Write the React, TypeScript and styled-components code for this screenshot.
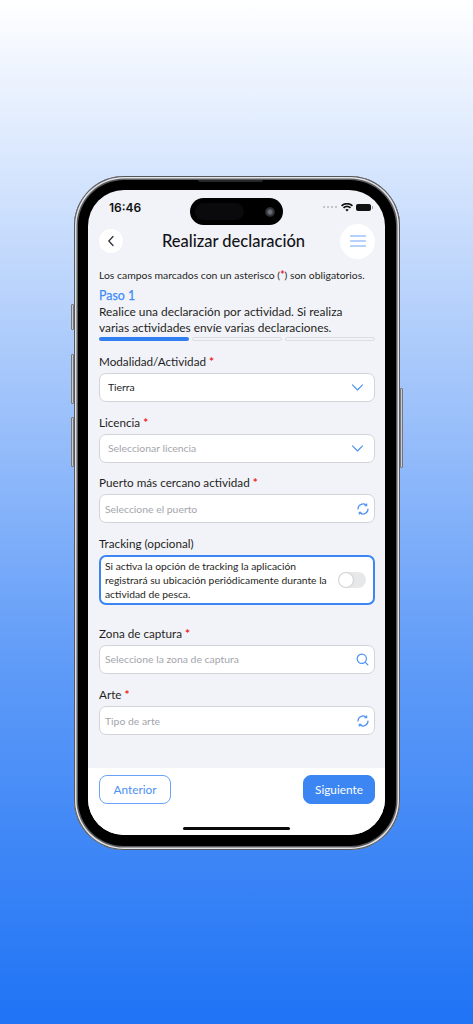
import React from "react";
import styled, { createGlobalStyle } from "styled-components";

const Global = createGlobalStyle`
  html, body { margin: 0; padding: 0; }
  body { font-family: "Lato", "Noto Sans", sans-serif; }
`;

const Page = styled.div`
  width: 473px;
  height: 1024px;
  box-sizing: border-box;
  padding: 176px 0 0 74px;
  background: linear-gradient(180deg, #ffffff 0%, #a9c9fb 35%, #5f9bf8 65%, #1f73f5 100%);
  overflow: hidden;
`;

const Phone = styled.div`
  position: relative;
  width: 326px;
  height: 674px;
  box-sizing: border-box;
  padding: 14px 15px 15px 14px;
  border-radius: 50px;
  background: #000;
  box-shadow: inset 0 0 0 1px #55575b, inset 0 0 0 2.5px #e2e4e7, inset 0 0 0 4px #5a5c60;
`;

const Speaker = styled.span`
  position: absolute;
  top: 4px;
  left: 124px;
  width: 65px;
  height: 2px;
  border-radius: 0 0 2px 2px;
  background: #26272a;
`;

const SideButton = styled.span<{ $side: "left" | "right"; $top: number; $h: number }>`
  position: absolute;
  top: ${p => p.$top}px;
  ${p => (p.$side === "left" ? "left: -3px;" : "right: -3px;")}
  width: 3px;
  height: ${p => p.$h}px;
  box-sizing: border-box;
  background: #c9cbcf;
  border: 1px solid #74767a;
  border-radius: 1px;
`;

const Screen = styled.div`
  width: 297px;
  height: 645px;
  border-radius: 36px;
  background: #f2f3f8;
  overflow: hidden;
  display: flex;
  flex-direction: column;
  position: relative;
`;

const StatusBar = styled.div`
  height: 30px;
  flex: none;
  display: flex;
  align-items: center;
  justify-content: space-between;
  padding: 4px 13px 0 21px;
  box-sizing: border-box;
`;

const Time = styled.span`
  font-family: "Inter", sans-serif;
  font-weight: 600;
  font-size: 12px;
  color: #111;
`;

const Island = styled.div`
  position: absolute;
  top: 8px;
  left: 102px;
  width: 93px;
  height: 27px;
  border-radius: 14px;
  background: #000;
`;

const IslandPill = styled.span`
  position: absolute;
  top: 5px;
  left: 5px;
  width: 49px;
  height: 17px;
  border-radius: 9px;
  background: #0a0a0c;
`;

const Lens = styled.span`
  position: absolute;
  top: 8.5px;
  right: 8.5px;
  width: 10px;
  height: 10px;
  border-radius: 50%;
  background: radial-gradient(circle, #6a6d74 0 22%, #33353b 48%, #101014 100%);
`;

const StatusIcons = styled.div`
  display: flex;
  align-items: center;
  gap: 3px;
`;

const Dots = styled.div`
  display: flex;
  gap: 1.5px;
  margin-right: 1px;
`;

const Dot = styled.span`
  width: 2.5px;
  height: 2.5px;
  border-radius: 50%;
  background: #b4b6bb;
`;

const Battery = styled.span`
  position: relative;
  width: 15px;
  height: 7px;
  border-radius: 2px;
  background: #111;
  margin-right: 1px;

  &::after {
    content: "";
    position: absolute;
    top: 2px;
    right: -2px;
    width: 1px;
    height: 3px;
    background: #9a9ca0;
  }
`;

const Header = styled.div`
  height: 42px;
  flex: none;
  display: flex;
  align-items: center;
  justify-content: space-between;
  padding: 0 10px 0 11px;
  box-sizing: border-box;
`;

const BackButton = styled.div`
  width: 24px;
  height: 24px;
  border-radius: 50%;
  background: #fff;
  display: flex;
  align-items: center;
  justify-content: center;
`;

const MenuButton = styled.div`
  width: 35px;
  height: 35px;
  border-radius: 50%;
  background: #fff;
  display: flex;
  align-items: center;
  justify-content: center;
`;

const Title = styled.h1`
  margin: 0 0 0 4px;
  font-size: 16.5px;
  font-weight: 500;
  color: #141418;
`;

const Content = styled.div`
  flex: 1;
  padding: 0 10px 0 11px;
  display: flex;
  flex-direction: column;
`;

const Note = styled.p`
  margin: 6px 0 0;
  font-size: 10.4px;
  line-height: 14px;
  color: #1f1f23;
`;

const Star = styled.span`
  color: #f01c1c;
  font-weight: 700;
`;

const Step = styled.div`
  margin-top: 6px;
  font-size: 12.4px;
  line-height: 15px;
  color: #3f8cf7;
  -webkit-text-stroke: 0.25px #3f8cf7;
`;

const Intro = styled.p`
  margin: 1px 0 0;
  font-size: 11.9px;
  line-height: 15.5px;
  color: #1f1f23;
`;

const Progress = styled.div`
  margin-top: 2px;
  display: grid;
  grid-template-columns: repeat(3, 1fr);
  gap: 3.5px;
`;

const Bar = styled.span<{ $on?: boolean }>`
  height: 4px;
  box-sizing: border-box;
  border-radius: 2px;
  background: ${p => (p.$on ? "#2f7ff0" : "#f2f3f8")};
  border: ${p => (p.$on ? "none" : "1px solid #dcdee3")};
`;

const Label = styled.div<{ $gap?: number }>`
  margin-top: ${p => p.$gap ?? 13}px;
  margin-bottom: 4px;
  font-size: 11.7px;
  line-height: 15px;
  color: #1f1f23;
`;

const Field = styled.div<{ $indent?: number }>`
  height: 29px;
  box-sizing: border-box;
  background: #fff;
  border: 1px solid #d3d4d9;
  border-radius: 7px;
  display: flex;
  align-items: center;
  justify-content: space-between;
  padding: 0 5px 0 ${p => p.$indent ?? 5}px;
`;

const Value = styled.span<{ $muted?: boolean; $lift?: boolean }>`
  font-size: 10.4px;
  color: ${p => (p.$muted ? "#a3a5ab" : "#222226")};
  margin-bottom: ${p => (p.$lift ? "2px" : "0")};
`;

const TrackBox = styled.div`
  height: 50px;
  box-sizing: border-box;
  background: #fff;
  border: 2px solid #3b86f2;
  border-radius: 7px;
  display: flex;
  align-items: center;
  justify-content: space-between;
  padding: 0 7px 0 4px;
`;

const TrackText = styled.p`
  margin: 0;
  width: 230px;
  font-size: 10.3px;
  line-height: 14px;
  color: #1f1f23;
`;

const Switch = styled.span`
  position: relative;
  width: 28px;
  height: 16px;
  border-radius: 8px;
  background: #e7e8ea;
  flex: none;
`;

const Knob = styled.span`
  position: absolute;
  top: 1px;
  left: 1px;
  width: 14px;
  height: 14px;
  border-radius: 50%;
  background: #fff;
  box-shadow: 0 0 2px rgba(0, 0, 0, 0.3);
`;

const Footer = styled.div`
  height: 67px;
  flex: none;
  background: #fff;
  display: flex;
  justify-content: space-between;
  align-items: flex-start;
  padding: 7px 10px 0 11px;
  box-sizing: border-box;
  position: relative;
`;

const Button = styled.div<{ $primary?: boolean }>`
  width: 72px;
  height: 29px;
  box-sizing: border-box;
  border-radius: 8px;
  border: 1px solid ${p => (p.$primary ? "#3b86f2" : "#69a3f7")};
  background: ${p => (p.$primary ? "#3b86f2" : "#fff")};
  color: ${p => (p.$primary ? "#fff" : "#4c90f5")};
  font-size: 11.8px;
  display: flex;
  align-items: center;
  justify-content: center;
`;

const HomeBar = styled.span`
  position: absolute;
  left: 95px;
  bottom: 5px;
  width: 107px;
  height: 3px;
  border-radius: 2px;
  background: #0a0a0a;
`;

const BLUE = "#4a90f5";

const Chevron = () => (
  <svg width="13" height="9" viewBox="0 0 13 9" fill="none" style={{ marginRight: 5 }}>
    <path d="M1.5 1.8 6.5 7l5-5.2" stroke={BLUE} strokeWidth="1.1" strokeLinecap="round" strokeLinejoin="round" />
  </svg>
);

const Refresh = () => (
  <svg width="12" height="12" viewBox="0 0 12 12" fill="none">
    <path d="M1 6a5 5 0 0 1 8.2-3.8" stroke={BLUE} strokeWidth="1.2" strokeLinecap="round" />
    <path d="M11 6a5 5 0 0 1-8.2 3.8" stroke={BLUE} strokeWidth="1.2" strokeLinecap="round" />
    <path d="M9.7.9v1.9H7.8M2.3 11.1V9.2h1.9" stroke={BLUE} strokeWidth="1.1" strokeLinecap="round" strokeLinejoin="round" />
  </svg>
);

const Search = () => (
  <svg width="13" height="13" viewBox="0 0 13 13" fill="none">
    <circle cx="5.8" cy="5.8" r="4.6" stroke={BLUE} strokeWidth="1.2" />
    <path d="M9.3 9.3l2.6 2.6" stroke={BLUE} strokeWidth="1.2" strokeLinecap="round" />
  </svg>
);

export default function App() {
  return (
    <Page>
      <Global />
      <Phone>
        <Speaker />
        <SideButton $side="left" $top={128} $h={26} />
        <SideButton $side="left" $top={178} $h={50} />
        <SideButton $side="left" $top={241} $h={50} />
        <SideButton $side="right" $top={212} $h={80} />
        <Screen>
          <StatusBar>
            <Time>16:46</Time>
            <StatusIcons>
              <Dots>
                <Dot />
                <Dot />
                <Dot />
                <Dot />
              </Dots>
              <svg width="12" height="9" viewBox="0 0 12 9">
                <path d="M6 8.6 4.3 6.7a2.5 2.5 0 0 1 3.4 0L6 8.6ZM3.1 5.5 1.9 4.2a6 6 0 0 1 8.2 0L8.9 5.5a4.3 4.3 0 0 0-5.8 0ZM1.1 3.4 0 2.2a8.8 8.8 0 0 1 12 0l-1.1 1.2a7.2 7.2 0 0 0-9.8 0Z" fill="#111" />
              </svg>
              <Battery />
            </StatusIcons>
          </StatusBar>
          <Island>
            <IslandPill />
            <Lens />
          </Island>
          <Header>
            <BackButton>
              <svg width="8" height="12" viewBox="0 0 8 12" fill="none">
                <path d="M6 1.5 1.8 6 6 10.5" stroke="#2b2d33" strokeWidth="1.2" strokeLinecap="round" strokeLinejoin="round" />
              </svg>
            </BackButton>
            <Title>Realizar declaración</Title>
            <MenuButton>
              <svg width="16" height="12" viewBox="0 0 16 12" fill="none">
                <path d="M.5 1h15M.5 6h15M.5 11h15" stroke="#6aa5f8" strokeWidth="1.1" strokeLinecap="round" />
              </svg>
            </MenuButton>
          </Header>
          <Content>
            <Note>
              Los campos marcados con un asterisco (<Star>*</Star>) son obligatorios.
            </Note>
            <Step>Paso 1</Step>
            <Intro>
              Realice una declaración por actividad. Si realiza
              <br />
              varias actividades envíe varias declaraciones.
            </Intro>
            <Progress>
              <Bar $on />
              <Bar />
              <Bar />
            </Progress>
            <Label>
              Modalidad/Actividad <Star>*</Star>
            </Label>
            <Field $indent={8}>
              <Value $lift>Tierra</Value>
              <Chevron />
            </Field>
            <Label>
              Licencia <Star>*</Star>
            </Label>
            <Field $indent={8}>
              <Value $muted $lift>Seleccionar licencia</Value>
              <Chevron />
            </Field>
            <Label $gap={12}>
              Puerto más cercano actividad <Star>*</Star>
            </Label>
            <Field>
              <Value $muted>Seleccione el puerto</Value>
              <Refresh />
            </Field>
            <Label>Tracking (opcional)</Label>
            <TrackBox>
              <TrackText>
                Si activa la opción de tracking la aplicación registrará su ubicación periódicamente durante la actividad de pesca.
              </TrackText>
              <Switch>
                <Knob />
              </Switch>
            </TrackBox>
            <Label $gap={21}>
              Zona de captura <Star>*</Star>
            </Label>
            <Field>
              <Value $muted $lift>Seleccione la zona de captura</Value>
              <Search />
            </Field>
            <Label>
              Arte <Star>*</Star>
            </Label>
            <Field>
              <Value $muted>Tipo de arte</Value>
              <Refresh />
            </Field>
          </Content>
          <Footer>
            <Button>Anterior</Button>
            <Button $primary>Siguiente</Button>
            <HomeBar />
          </Footer>
        </Screen>
      </Phone>
    </Page>
  );
}
